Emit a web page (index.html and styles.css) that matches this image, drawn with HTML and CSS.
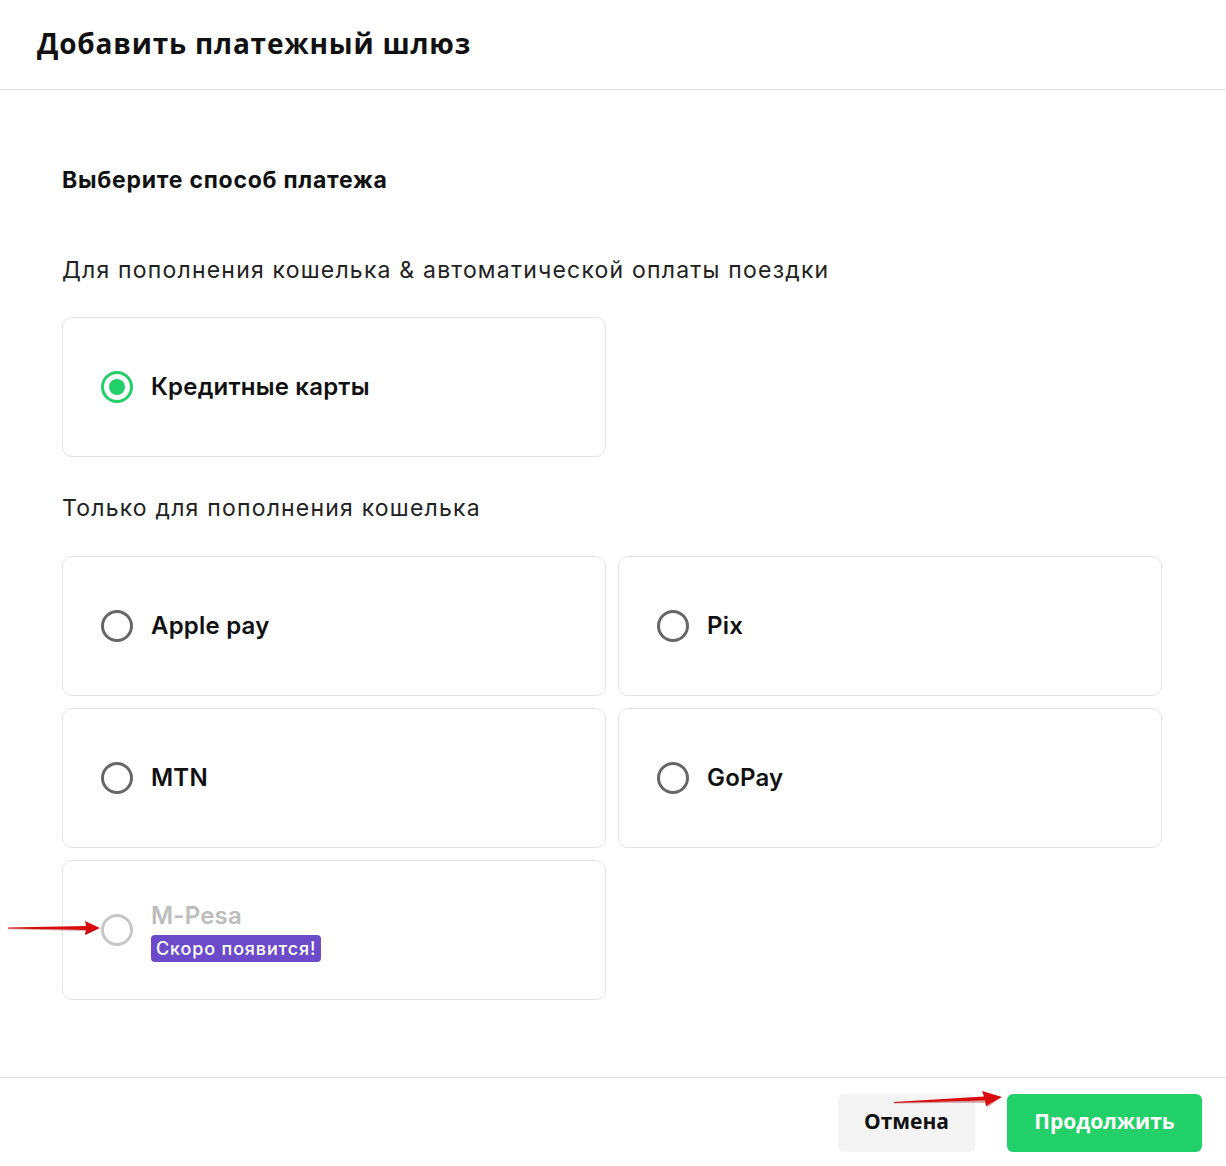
FILE: index.html
```html
<!DOCTYPE html>
<html lang="ru">
<head>
<meta charset="utf-8">
<title>Добавить платежный шлюз</title>
<link rel="stylesheet" href="styles.css">
</head>
<body>
<div class="modal">
  <header class="modal-header">
    <h1 class="modal-title">Добавить платежный шлюз</h1>
  </header>
  <main class="modal-body">
    <h2 class="section-title">Выберите способ платежа</h2>
    <h3 class="group-title group-title-first">Для пополнения кошелька &amp; автоматической оплаты поездки</h3>
    <div class="grid">
      <label class="option">
        <span class="radio radio-checked"></span>
        <span class="option-label">Кредитные карты</span>
      </label>
    </div>
    <h3 class="group-title group-title-second">Только для пополнения кошелька</h3>
    <div class="grid">
      <label class="option">
        <span class="radio"></span>
        <span class="option-label">Apple pay</span>
      </label>
      <label class="option">
        <span class="radio"></span>
        <span class="option-label">Pix</span>
      </label>
      <label class="option">
        <span class="radio"></span>
        <span class="option-label">MTN</span>
      </label>
      <label class="option">
        <span class="radio"></span>
        <span class="option-label">GoPay</span>
      </label>
      <label class="option option-disabled">
        <span class="radio radio-disabled"></span>
        <span class="option-text">
          <span class="option-label">M-Pesa</span>
          <span class="badge">Скоро появится!</span>
        </span>
      </label>
    </div>
  </main>
  <footer class="modal-footer">
    <button class="btn btn-cancel" type="button">Отмена</button>
    <button class="btn btn-primary" type="button">Продолжить</button>
  </footer>
</div>

<svg class="arrow arrow-left" width="100" height="24" viewBox="0 0 100 24" aria-hidden="true">
  <polygon points="2,11.6 80,10 79,5 94,12 79,19 80,14 2,12.6" fill="#d80c0c"/>
  <polygon points="2,12.6 80,14 79,19 94,12 92,13 80,16.5 81,15 2,13.2" fill="#8a0a0a" opacity="0.35"/>
</svg>
<svg class="arrow arrow-right" width="116" height="26" viewBox="0 0 116 26" aria-hidden="true">
  <polygon points="2,16 92,10.5 90,5 110,11 94,20 93,14.5 2,17" fill="#d80c0c"/>
  <polygon points="2,17 93,14.5 94,20 110,11 108,12.5 95,21.5 94,16.5 2,17.6" fill="#8a0a0a" opacity="0.35"/>
</svg>
</body>
</html>
```
FILE: styles.css
```css
html, body {
  margin: 0;
  padding: 0;
  background: #ffffff;
}

body {
  font-family: Inter, Roboto, "Noto Sans", "Liberation Sans", sans-serif;
  color: #111111;
  position: relative;
  width: 1226px;
  height: 1166px;
  overflow: hidden;
}

.modal {
  display: flex;
  flex-direction: column;
  height: 1166px;
}

.modal-header {
  height: 89px;
  border-bottom: 1px solid #e2e2e2;
  display: flex;
  align-items: center;
  padding: 0 37px;
  box-sizing: content-box;
}

.modal-title {
  margin: 0 0 4px;
  font-family: "Open Sans", "Liberation Sans", sans-serif;
  font-weight: 700;
  font-size: 28px;
  line-height: 36px;
  color: #111111;
  letter-spacing: 0.8px;
}

.modal-body {
  padding: 76px 64px 77px 62px;
}

.section-title {
  margin: 0;
  font-size: 23px;
  line-height: 28px;
  font-weight: 700;
  color: #111111;
  letter-spacing: 0.75px;
}

.group-title {
  margin: 0;
  font-size: 23px;
  line-height: 28px;
  font-weight: 400;
  color: #222222;
  letter-spacing: 1.2px;
}

.group-title-first {
  margin-top: 62px;
  margin-bottom: 33px;
}

.group-title-second {
  margin-top: 37px;
  margin-bottom: 34px;
}

.grid {
  display: grid;
  grid-template-columns: 544px 544px;
  column-gap: 12px;
  row-gap: 12px;
}

.option {
  box-sizing: border-box;
  height: 140px;
  border: 1px solid #e3e3e3;
  border-radius: 10px;
  display: flex;
  align-items: center;
  padding-left: 38px;
  gap: 18px;
  background: #ffffff;
}

.radio {
  box-sizing: border-box;
  flex: none;
  width: 32px;
  height: 32px;
  border-radius: 50%;
  border: 3px solid #666666;
  display: flex;
  align-items: center;
  justify-content: center;
}

.radio-checked {
  border-color: #22cf68;
}

.radio-checked::after {
  content: "";
  width: 16px;
  height: 16px;
  border-radius: 50%;
  background: #22cf68;
}

.radio-disabled {
  border-color: #c6c6c6;
}

.option-label {
  font-size: 24px;
  line-height: 28px;
  font-weight: 600;
  color: #111111;
  letter-spacing: 0.2px;
}

.option-text {
  display: flex;
  flex-direction: column;
  align-items: flex-start;
  gap: 5px;
  margin-top: 4px;
}

.option-disabled .option-label {
  color: #bdbdbd;
}

.badge {
  background: #6c4bcb;
  color: #ffffff;
  font-size: 18px;
  line-height: 27px;
  padding: 0 5px;
  border-radius: 4px;
  font-weight: 500;
  letter-spacing: 0.85px;
}

.modal-footer {
  flex: 1;
  border-top: 1px solid #e2e2e2;
  display: flex;
  justify-content: flex-end;
  align-items: flex-start;
  gap: 32px;
  padding: 16px 24px 0 0;
}

.btn {
  height: 58px;
  border: none;
  border-radius: 6px;
  font-family: "Open Sans", "Liberation Sans", sans-serif;
  font-weight: 700;
  font-size: 21px;
  line-height: 24px;
  padding: 0 0 4px;
  cursor: pointer;
}

.btn-cancel {
  width: 137px;
  background: #f4f4f4;
  color: #111111;
}

.btn-primary {
  width: 195px;
  background: #22d06a;
  color: #ffffff;
}

.arrow {
  position: absolute;
  pointer-events: none;
}

.arrow-left {
  left: 6px;
  top: 916px;
}

.arrow-right {
  left: 892px;
  top: 1086px;
}
```
